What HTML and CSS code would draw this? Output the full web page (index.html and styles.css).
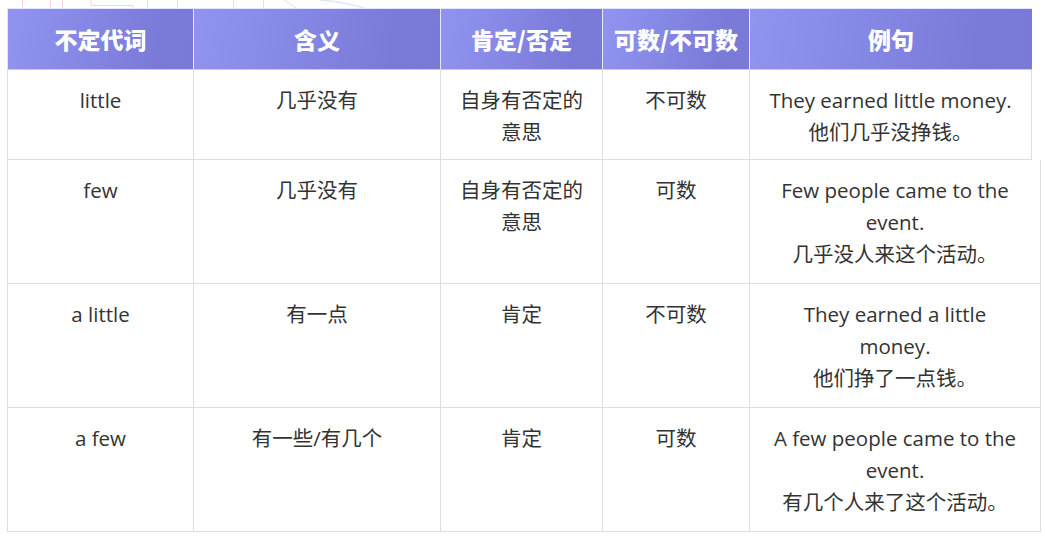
FILE: index.html
```html
<!DOCTYPE html>
<html lang="zh">
<head>
<meta charset="utf-8">
<title>不定代词</title>
<link rel="stylesheet" href="styles.css">
</head>
<body>
<div class="page">
  <svg class="deco" width="380" height="9" viewBox="0 0 380 9" aria-hidden="true">
    <g stroke="#f6d3dc" stroke-width="1" fill="none">
      <line x1="22.5" y1="0" x2="22.5" y2="8"/>
      <line x1="50.5" y1="0" x2="50.5" y2="8"/>
      <line x1="62.5" y1="0" x2="62.5" y2="8"/>
      <polyline points="91,0 91,5.5 133,5.5 133,8"/>
      <line x1="147.5" y1="0" x2="147.5" y2="8"/>
      <line x1="177.5" y1="0" x2="177.5" y2="8"/>
    </g>
    <g stroke="#e6dcf6" stroke-width="1" fill="none">
      <line x1="233.5" y1="0" x2="233.5" y2="8"/>
      <line x1="263.5" y1="0" x2="263.5" y2="8"/>
      <path d="M284 0 Q290 4 296 8"/>
    </g>
    <path d="M320 0 Q345 2 364 8" stroke="#dce9f8" stroke-width="1.5" fill="none"/>
  </svg>
  <div class="table">
    <div class="row head">
      <div class="cell c1">不定代词</div>
      <div class="cell c2">含义</div>
      <div class="cell c3">肯定/否定</div>
      <div class="cell c4">可数/不可数</div>
      <div class="cell c5 short">例句</div>
    </div>
    <div class="row">
      <div class="cell c1">little</div>
      <div class="cell c2">几乎没有</div>
      <div class="cell c3">自身有否定的意思</div>
      <div class="cell c4">不可数</div>
      <div class="cell c5 short">They earned little money.<br>他们几乎没挣钱。</div>
    </div>
    <div class="row tall">
      <div class="cell c1">few</div>
      <div class="cell c2">几乎没有</div>
      <div class="cell c3">自身有否定的意思</div>
      <div class="cell c4">可数</div>
      <div class="cell c5">Few people came to the event.<br>几乎没人来这个活动。</div>
    </div>
    <div class="row tall">
      <div class="cell c1">a little</div>
      <div class="cell c2">有一点</div>
      <div class="cell c3">肯定</div>
      <div class="cell c4">不可数</div>
      <div class="cell c5">They earned a little money.<br>他们挣了一点钱。</div>
    </div>
    <div class="row tall">
      <div class="cell c1">a few</div>
      <div class="cell c2">有一些/有几个</div>
      <div class="cell c3">肯定</div>
      <div class="cell c4">可数</div>
      <div class="cell c5">A few people came to the event.<br>有几个人来了这个活动。</div>
    </div>
  </div>
</div>
</body>
</html>
```

FILE: styles.css
```css
* { box-sizing: border-box; }
html, body { margin: 0; padding: 0; background: #ffffff; }
body {
  font-family: "Open Sans", "Noto Sans CJK SC", sans-serif;
  color: #333333;
}
.page {
  position: relative;
  width: 1045px;
  height: 541px;
  padding: 8px 0 0 7px;
  overflow: hidden;
}
.deco {
  position: absolute;
  left: 0;
  top: 0;
}
.table {
  position: relative;
  display: flex;
  flex-direction: column;
}
.row {
  display: flex;
}
.cell {
  flex: none;
  border-right: 1px solid #dddddd;
  border-bottom: 1px solid #dddddd;
  padding: 14px 18px 11px;
  font-size: 20.5px;
  line-height: 32px;
  text-align: center;
}
.row.tall .cell { padding-bottom: 13px; }
.row .c1 { border-left: 1px solid #dddddd; }
.c1 { width: 187px; }
.c2 { width: 247px; }
.c3 { width: 162px; }
.c4 { width: 147px; }
.c5 { width: 291px; }
.c5.short { width: 282px; }

.head .cell {
  height: 62px;
  padding: 0;
  display: flex;
  align-items: center;
  justify-content: center;
  color: #ffffff;
  font-family: "Noto Sans CJK SC", sans-serif;
  font-weight: 900;
  font-size: 23px;
  background: linear-gradient(100deg, #9094ef 0%, #8486e3 45%, #7a7ad9 80%, #7979d8 100%);
  border-right: 1px solid #e9e9fb;
  border-bottom: 1px solid #c9c9ee;
  border-top: 1px solid #e6e6fa;
}
.head .c1 { border-left: 1px solid #e6e6fa; }
.head .c5 { border-right: none; }
```
